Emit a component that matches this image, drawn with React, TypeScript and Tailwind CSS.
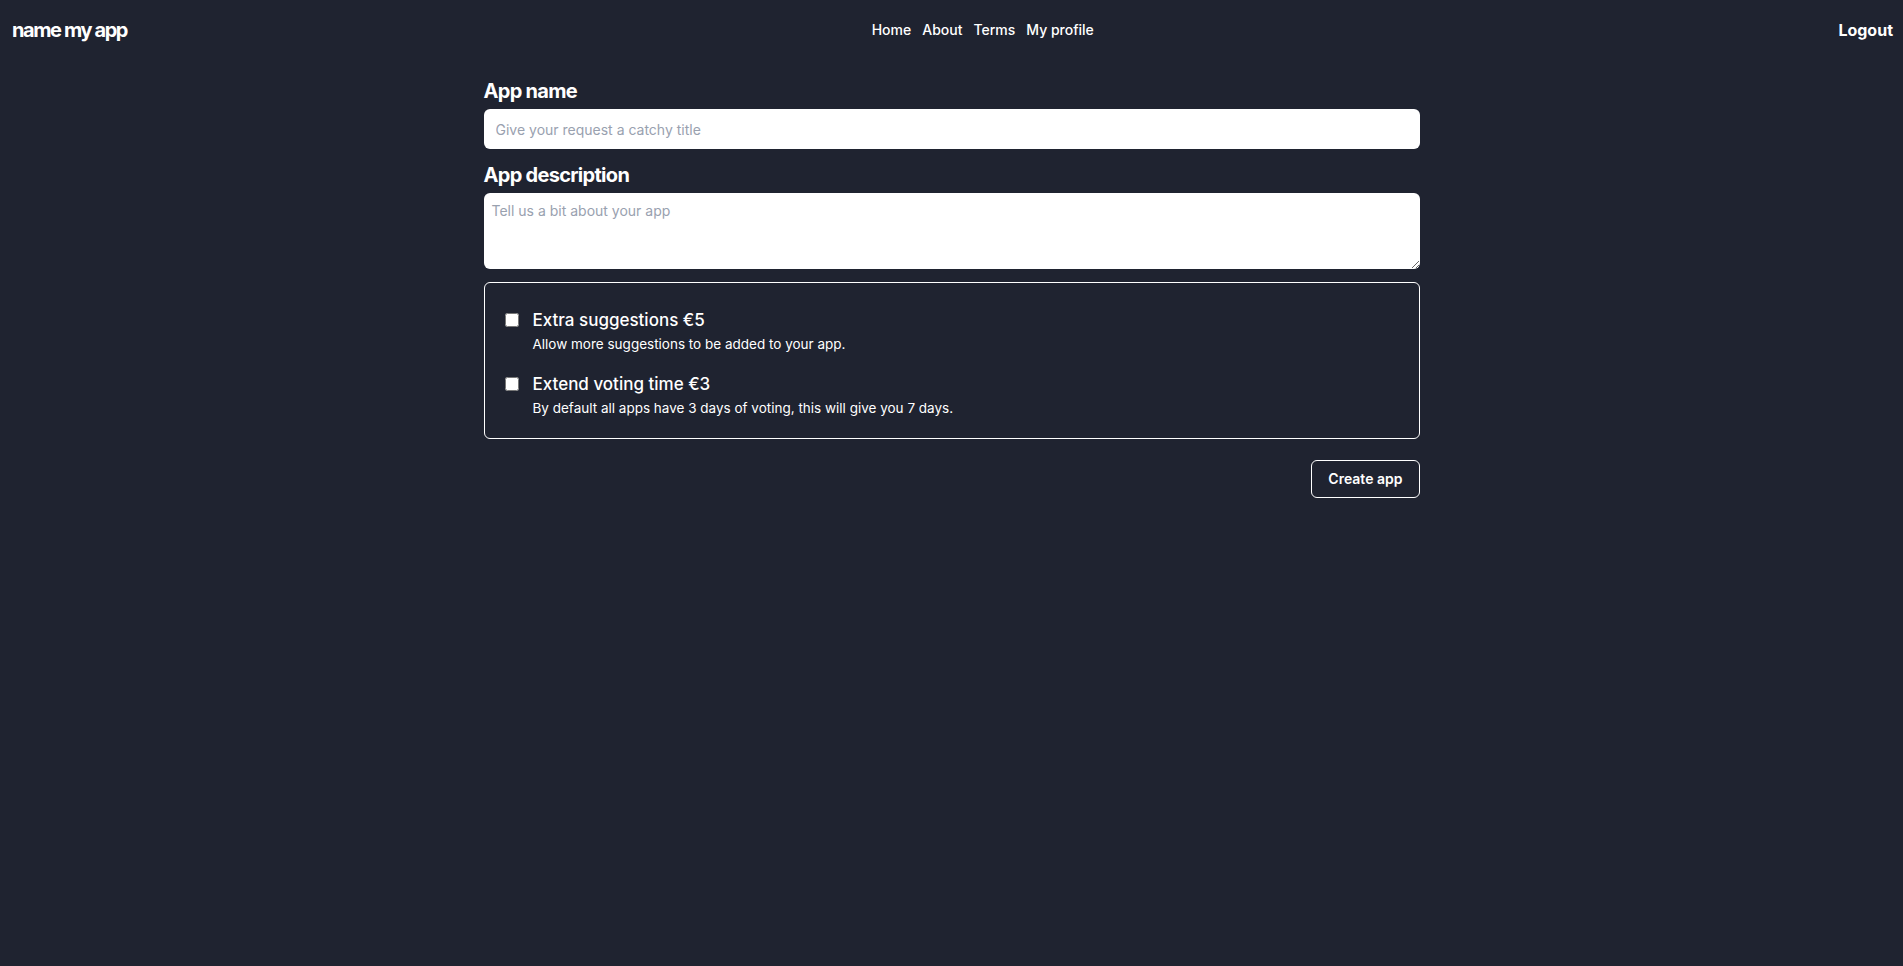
import React, { useState } from "react";

const navLinks = ["Home", "About", "Terms", "My profile"];

const extras = [
  {
    id: "suggestions",
    title: "Extra suggestions €5",
    description: "Allow more suggestions to be added to your app.",
  },
  {
    id: "voting",
    title: "Extend voting time €3",
    description: "By default all apps have 3 days of voting, this will give you 7 days.",
  },
];

export default function App() {
  const [name, setName] = useState("");
  const [description, setDescription] = useState("");
  const [selected, setSelected] = useState<Record<string, boolean>>({});

  return (
    <div className="min-h-screen bg-[#1f2330] text-white font-['Inter','Liberation_Sans',sans-serif]">
      <header className="flex items-center justify-between h-[60px] pl-3 pr-2.5">
        <a href="#" className="text-[20px] font-bold tracking-[-0.07em] leading-7">
          name my app
        </a>
        <nav className="flex items-center gap-[11px] text-sm font-medium">
          {navLinks.map((link) => (
            <a key={link} href="#">
              {link}
            </a>
          ))}
        </nav>
        <button className="text-base font-bold">Logout</button>
      </header>

      <main className="mx-auto max-w-[936px] pt-[17px]">
        <form onSubmit={(e) => e.preventDefault()}>
          <label htmlFor="name" className="block text-xl font-bold leading-7 tracking-[-0.035em] mb-1">
            App name
          </label>
          <input
            id="name"
            value={name}
            onChange={(e) => setName(e.target.value)}
            placeholder="Give your request a catchy title"
            className="block w-full h-10 rounded-md bg-white px-3 text-sm text-gray-900 placeholder:text-gray-400 outline-none"
          />

          <label htmlFor="description" className="block text-xl font-bold leading-7 tracking-[-0.035em] mt-3 mb-1">
            App description
          </label>
          <textarea
            id="description"
            value={description}
            onChange={(e) => setDescription(e.target.value)}
            placeholder="Tell us a bit about your app"
            className="block w-full h-[76px] rounded-md bg-white px-2 py-2 text-sm text-gray-900 placeholder:text-gray-400 outline-none"
          />

          <div className="mt-[13px] rounded-md border border-white px-5 pt-[25px] pb-[20px] flex flex-col gap-[18px]">
            {extras.map((extra) => (
              <label key={extra.id} className="flex items-start gap-[14px] cursor-pointer">
                <input
                  type="checkbox"
                  checked={!!selected[extra.id]}
                  onChange={(e) => setSelected({ ...selected, [extra.id]: e.target.checked })}
                  className="mt-[5px] w-[14px] h-[14px] shrink-0"
                />
                <div>
                  <p className="text-[17px] font-medium leading-6">{extra.title}</p>
                  <p className="text-[13.5px] leading-5 mt-[2px]">{extra.description}</p>
                </div>
              </label>
            ))}
          </div>

          <div className="flex justify-end mt-[21px]">
            <button type="submit" className="h-[38px] rounded-md border border-white px-4 text-sm font-semibold">
              Create app
            </button>
          </div>
        </form>
      </main>
    </div>
  );
}
